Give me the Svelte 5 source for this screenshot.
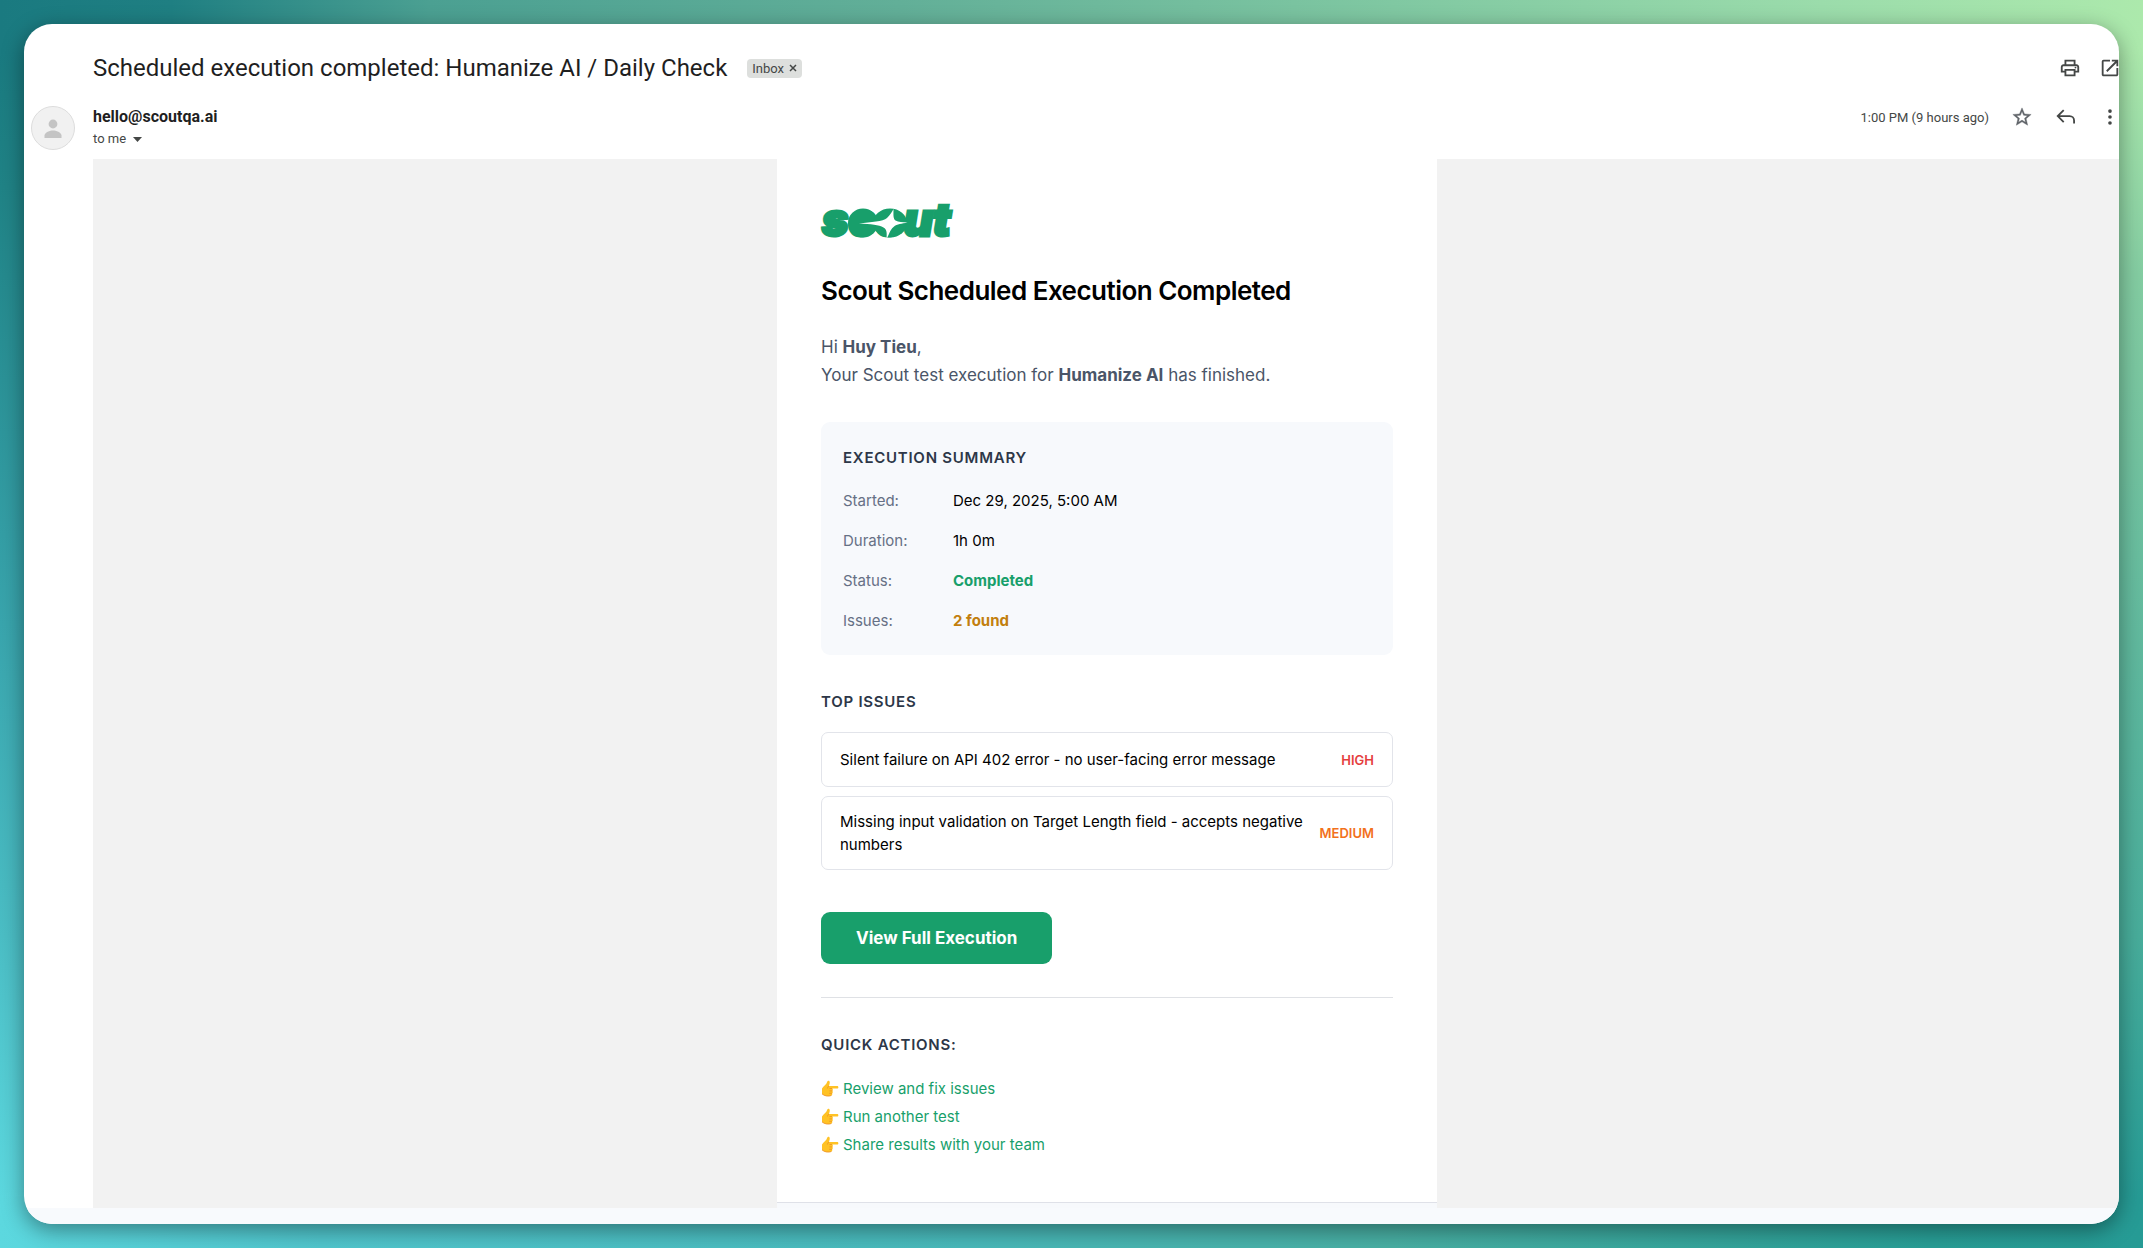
<script lang="ts">
  type Detail = { label: string; value: string; tone?: 'success' | 'warning' };
  type Issue = { title: string; severity: 'high' | 'medium' };

  const details: Detail[] = [
    { label: 'Started:', value: 'Dec 29, 2025, 5:00 AM' },
    { label: 'Duration:', value: '1h 0m' },
    { label: 'Status:', value: 'Completed', tone: 'success' },
    { label: 'Issues:', value: '2 found', tone: 'warning' },
  ];

  const issues: Issue[] = [
    { title: 'Silent failure on API 402 error - no user-facing error message', severity: 'high' },
    {
      title: 'Missing input validation on Target Length field - accepts negative numbers',
      severity: 'medium',
    },
  ];

  const actions = ['Review and fix issues', 'Run another test', 'Share results with your team'];

  let starred = $state(false);
  let inInbox = $state(true);
</script>

<div class="desktop">
  <main class="window">
    <header class="mail-header">
      <div class="subject-row">
        <h1 class="subject">Scheduled execution completed: Humanize AI / Daily Check</h1>
        {#if inInbox}
          <span class="label-chip">
            Inbox
            <button type="button" class="chip-close" aria-label="Remove label" onclick={() => (inInbox = false)}>
              <svg viewBox="0 0 8 8" width="8" height="8">
                <path d="M1 1l6 6M7 1L1 7" stroke="currentColor" stroke-width="1.5" />
              </svg>
            </button>
          </span>
        {/if}
        <div class="page-tools">
          <button type="button" class="icon-button" aria-label="Print">
            <svg viewBox="0 0 24 24">
              <path d="M19 8h-1V3H6v5H5c-1.66 0-3 1.34-3 3v6h4v4h12v-4h4v-6c0-1.66-1.34-3-3-3zM8 5h8v3H8V5zm8 14H8v-4h8v4zm2-4v-2H6v2H4v-4c0-.55.45-1 1-1h14c.55 0 1 .45 1 1v4h-2z" />
              <circle cx="18" cy="11.5" r="1" />
            </svg>
          </button>
          <button type="button" class="icon-button" aria-label="Open in new window">
            <svg viewBox="0 0 24 24">
              <path d="M19 19H5V5h7V3H5a2 2 0 0 0-2 2v14c0 1.1.9 2 2 2h14c1.1 0 2-.9 2-2v-7h-2v7zM14 3v2h3.59l-9.83 9.83 1.41 1.41L19 6.41V10h2V3h-7z" />
            </svg>
          </button>
        </div>
      </div>

      <div class="sender-row">
        <svg class="avatar" viewBox="0 0 44 44" aria-hidden="true">
          <circle cx="22" cy="22" r="21.5" fill="#f1f1f1" stroke="#dcdcdc" />
          <circle cx="22" cy="18" r="4.4" fill="#c4c4c4" />
          <path d="M13.5 32v-2.4c0-3.4 5.6-5.2 8.5-5.2s8.5 1.8 8.5 5.2V32z" fill="#c4c4c4" />
        </svg>
        <div class="sender">
          <strong class="sender-name">hello@scoutqa.ai</strong>
          <button type="button" class="recipient">
            to me
            <svg viewBox="0 0 9 5" width="9" height="5"><path d="M0 0h9L4.5 5z" fill="currentColor" /></svg>
          </button>
        </div>
        <div class="message-tools">
          <time class="sent">1:00 PM (9 hours ago)</time>
          <button type="button" class="icon-button" aria-label="Star" aria-pressed={starred} onclick={() => (starred = !starred)}>
            <svg viewBox="0 0 24 24" class="star">
              <path d="M22 9.24l-7.19-.62L12 2 9.19 8.63 2 9.24l5.46 4.73L5.82 21 12 17.27 18.18 21l-1.63-7.03L22 9.24zM12 15.4l-3.76 2.27 1-4.28-3.32-2.88 4.38-.38L12 6.1l1.71 4.04 4.38.38-3.32 2.88 1 4.28L12 15.4z" />
            </svg>
          </button>
          <button type="button" class="icon-button" aria-label="Reply">
            <svg viewBox="0 0 24 24">
              <path d="M9.5 4.5L3 11l6.5 6.5M3.5 11H16c2.8 0 4.8 2 4.8 4.8V19" fill="none" stroke="#444746" stroke-width="2" />
            </svg>
          </button>
          <button type="button" class="icon-button" aria-label="More">
            <svg viewBox="0 0 24 24">
              <circle cx="12" cy="5.5" r="2" /><circle cx="12" cy="12" r="2" /><circle cx="12" cy="18.5" r="2" />
            </svg>
          </button>
        </div>
      </div>
    </header>

    <div class="mail-body">
      <article class="email">
        <div class="email-content">
          <svg class="logo" viewBox="0 0 134 36" role="img" aria-label="scout">
            <text x="1" y="33" class="logo-text">scout</text>
            <ellipse cx="42" cy="20" rx="15" ry="14.5" fill="#189f6b" />
            <ellipse cx="69" cy="20" rx="17" ry="14.5" fill="#189f6b" />
            <path d="M38 20.5C50 18.8 62 19 66 15 69 12 71 9 72.5 6c0 6-.5 9.5 2 11.5 3 1.6 7 1.5 12 2-6 1.5-10 1-14 4.5-4 3.5-4 7-7 12 .5-6 .5-9.5-3-11.5C58 21.5 50 21.3 38 20.5z" fill="#fff" />
          </svg>

          <h2 class="title">Scout Scheduled Execution Completed</h2>
          <p class="greeting">
            Hi <strong>Huy Tieu</strong>,<br />
            Your Scout test execution for <strong>Humanize AI</strong> has finished.
          </p>

          <section class="summary">
            <h3 class="section-title">Execution Summary</h3>
            <table class="details">
              <tbody>
                {#each details as detail}
                  <tr>
                    <th scope="row">{detail.label}</th>
                    <td class={detail.tone}>{detail.value}</td>
                  </tr>
                {/each}
              </tbody>
            </table>
          </section>

          <section class="top-issues">
            <h3 class="section-title">Top Issues</h3>
            <ul class="issue-list">
              {#each issues as issue}
                <li class="issue">
                  <span class="issue-title">{issue.title}</span>
                  <span class="severity {issue.severity}">{issue.severity}</span>
                </li>
              {/each}
            </ul>
          </section>

          <a class="cta" href="#execution">View Full Execution</a>

          <section class="quick-actions">
            <h3 class="section-title">Quick Actions:</h3>
            <ul class="action-list">
              {#each actions as action}
                <li>
                  <svg class="hand" viewBox="0 0 18 18" aria-hidden="true">
                    <path d="M1 8.5C2.5 6 5.5 4.8 6.2 1.8c.3-1.3 2.3-1.3 2.5.2.2 1.4-.3 2.7-.8 3.9h8.3c1.6 0 1.6 2.6 0 2.6h-5.1c1 .4 1 1.9.2 2.4.7.6.6 2-.2 2.4.5.7.2 1.9-.7 2.2-2.6 1-7 .8-9.4-1.7z" fill="#ffc224" />
                    <path d="M7.9 5.9c-.8.9-1.3 1.4-1.5 2.6M11.1 8.5H8.6M11.3 10.9H8.4M11 13.3H8.2M1 13.8c2.4 2.5 6.8 2.7 9.4 1.7" fill="none" stroke="#ee9526" stroke-width="0.9" />
                  </svg>
                  <a href="#action">{action}</a>
                </li>
              {/each}
            </ul>
          </section>
        </div>
        <div class="email-footer"></div>
      </article>
    </div>
    <div class="window-footer"></div>
  </main>
</div>

<style>
  :global(body) {
    background: #3f9f98;
  }

  .desktop {
    display: flex;
    box-sizing: border-box;
    min-height: 100vh;
    padding: 24px;
    font-family: Inter, 'Liberation Sans', sans-serif;
    background:
      linear-gradient(to right, #1a7a80 0%, #1f7f82 8%, #4ba092 20%, #62af98 42%, #80c8a2 65%, #9bdcab 85%, #ace9ac 100%) top / 100% 52px no-repeat,
      linear-gradient(to right, #5cd8df 0%, #50c6cd 15%, #48b9ba 45%, #48afa3 65%, #289e96 90%, #269b95 100%) bottom / 100% 52px no-repeat,
      linear-gradient(to bottom, #1a7a80 0%, #1a7a80 4%, #208386 15%, #39a5ad 50%, #4bbec5 75%, #5cd8df 96%) left / 52px 100% no-repeat,
      linear-gradient(to bottom, #ace9ac 0%, #ace9ac 4%, #84cda2 22%, #60b99e 52%, #48ad9b 75%, #269b95 96%) right / 52px 100% no-repeat;
  }

  .window {
    flex: 1;
    display: flex;
    flex-direction: column;
    min-width: 0;
    overflow: hidden;
    background: #fff;
    border-radius: 28px;
    box-shadow: 0 6px 22px rgba(0, 0, 0, 0.4);
  }

  .mail-header {
    margin-right: -2px;
    padding: 28px 0 9px 7px;
    color: #444746;
    font-family: Roboto, 'Liberation Sans', sans-serif;
  }

  .subject-row {
    display: flex;
    align-items: center;
    padding-left: 62px;
  }

  .subject {
    margin: 0;
    font-size: 24px;
    line-height: 32px;
    font-weight: 400;
    color: #1f1f1f;
  }

  .label-chip {
    display: flex;
    align-items: center;
    gap: 5px;
    margin-left: 20px;
    padding: 0 5px;
    font-size: 13px;
    line-height: 19px;
    background: #dddfdd;
    border-radius: 4px;
  }

  button {
    padding: 0;
    font: inherit;
    color: inherit;
    background: none;
    border: 0;
    cursor: pointer;
  }

  .chip-close {
    display: flex;
  }

  .page-tools,
  .message-tools {
    display: flex;
    align-items: center;
    margin-left: auto;
  }

  .page-tools {
    gap: 18px;
  }

  .message-tools {
    gap: 22px;
    height: 22px;
  }

  .icon-button {
    display: flex;
  }

  .icon-button svg {
    width: 22px;
    height: 22px;
    fill: #444746;
  }

  .icon-button .star {
    fill: #5f6368;
    stroke: #5f6368;
    stroke-width: 0.4px;
  }

  .sender-row {
    display: flex;
    align-items: flex-start;
    padding-top: 22px;
  }

  .avatar {
    width: 44px;
    height: 44px;
  }

  .sender {
    display: flex;
    flex-direction: column;
    align-items: flex-start;
    padding-left: 18px;
  }

  .sender-name {
    font-size: 16px;
    line-height: 22px;
    font-weight: 700;
    color: #1f1f1f;
  }

  .recipient {
    display: flex;
    align-items: center;
    gap: 7px;
    font-size: 13px;
    line-height: 22px;
  }

  .sent {
    font-size: 13px;
  }

  .mail-body {
    flex: 1;
    display: flex;
    justify-content: center;
    margin-left: 69px;
    padding-left: 2px;
    background: #f2f2f2;
  }

  .email {
    display: flex;
    flex-direction: column;
    width: 660px;
    background: #fff;
  }

  .email-content {
    padding: 44px 44px 43px;
  }

  .logo {
    display: block;
    width: 134px;
    height: 36px;
    overflow: visible;
  }

  .logo-text {
    font-size: 45px;
    font-weight: 900;
    font-style: italic;
    fill: #189f6b;
    stroke: #189f6b;
    stroke-width: 3px;
  }

  .title {
    margin: 35px 0 25px;
    font-size: 26px;
    line-height: 34px;
    font-weight: 600;
    letter-spacing: -0.02em;
    color: #000;
  }

  .greeting {
    margin: 0 0 33px;
    font-size: 17px;
    line-height: 28px;
    color: #4a5568;
  }

  .summary {
    padding: 25px 22px 14px;
    background: #f7f9fc;
    border-radius: 9px;
  }

  .section-title {
    margin: 0;
    font-size: 15px;
    line-height: 22px;
    font-weight: 600;
    letter-spacing: 0.05em;
    text-transform: uppercase;
    color: #2d3748;
  }

  .details {
    width: 100%;
    margin-top: 12px;
    border-collapse: collapse;
    font-size: 15px;
    line-height: 22px;
  }

  .details th {
    width: 110px;
    padding: 9px 0;
    font-weight: 400;
    text-align: left;
    color: #667085;
  }

  .details td {
    padding: 9px 0;
    color: #000;
  }

  .details .success {
    font-weight: 700;
    color: #189f6b;
  }

  .details .warning {
    font-weight: 700;
    color: #c27f0e;
  }

  .top-issues {
    margin-top: 36px;
  }

  ul {
    margin: 19px 0 0;
    padding: 0;
    list-style: none;
  }

  .issue-list {
    display: flex;
    flex-direction: column;
    gap: 9px;
  }

  .issue {
    display: flex;
    align-items: center;
    justify-content: space-between;
    gap: 16px;
    box-sizing: border-box;
    min-height: 55px;
    padding: 13px 18px;
    border: 1px solid #e2e4ea;
    border-radius: 7px;
  }

  .issue-title {
    font-size: 15px;
    line-height: 23px;
    color: #000;
  }

  .severity {
    font-size: 13px;
    line-height: 20px;
    font-weight: 600;
    text-transform: uppercase;
  }

  .severity.high {
    color: #e53e3e;
  }

  .severity.medium {
    color: #f2711c;
  }

  .cta {
    display: inline-block;
    margin-top: 42px;
    padding: 0 35px;
    font-size: 17px;
    line-height: 52px;
    font-weight: 700;
    color: #fff;
    text-decoration: none;
    background: #189f6b;
    border-radius: 9px;
    vertical-align: top;
  }

  .quick-actions {
    margin-top: 33px;
    padding-top: 36px;
    border-top: 1px solid #dfe1e5;
  }

  .action-list li {
    display: flex;
    align-items: center;
    gap: 4px;
    font-size: 15px;
    line-height: 28px;
  }

  .action-list a {
    color: #189f6b;
    text-decoration: none;
  }

  .hand {
    width: 18px;
    height: 18px;
  }

  .email-footer {
    flex: 1;
    min-height: 5px;
    background: #f7f9fc;
    border-top: 1px solid #dfe1e8;
  }

  .window-footer {
    height: 16px;
    background: #f8fafd;
  }
</style>
